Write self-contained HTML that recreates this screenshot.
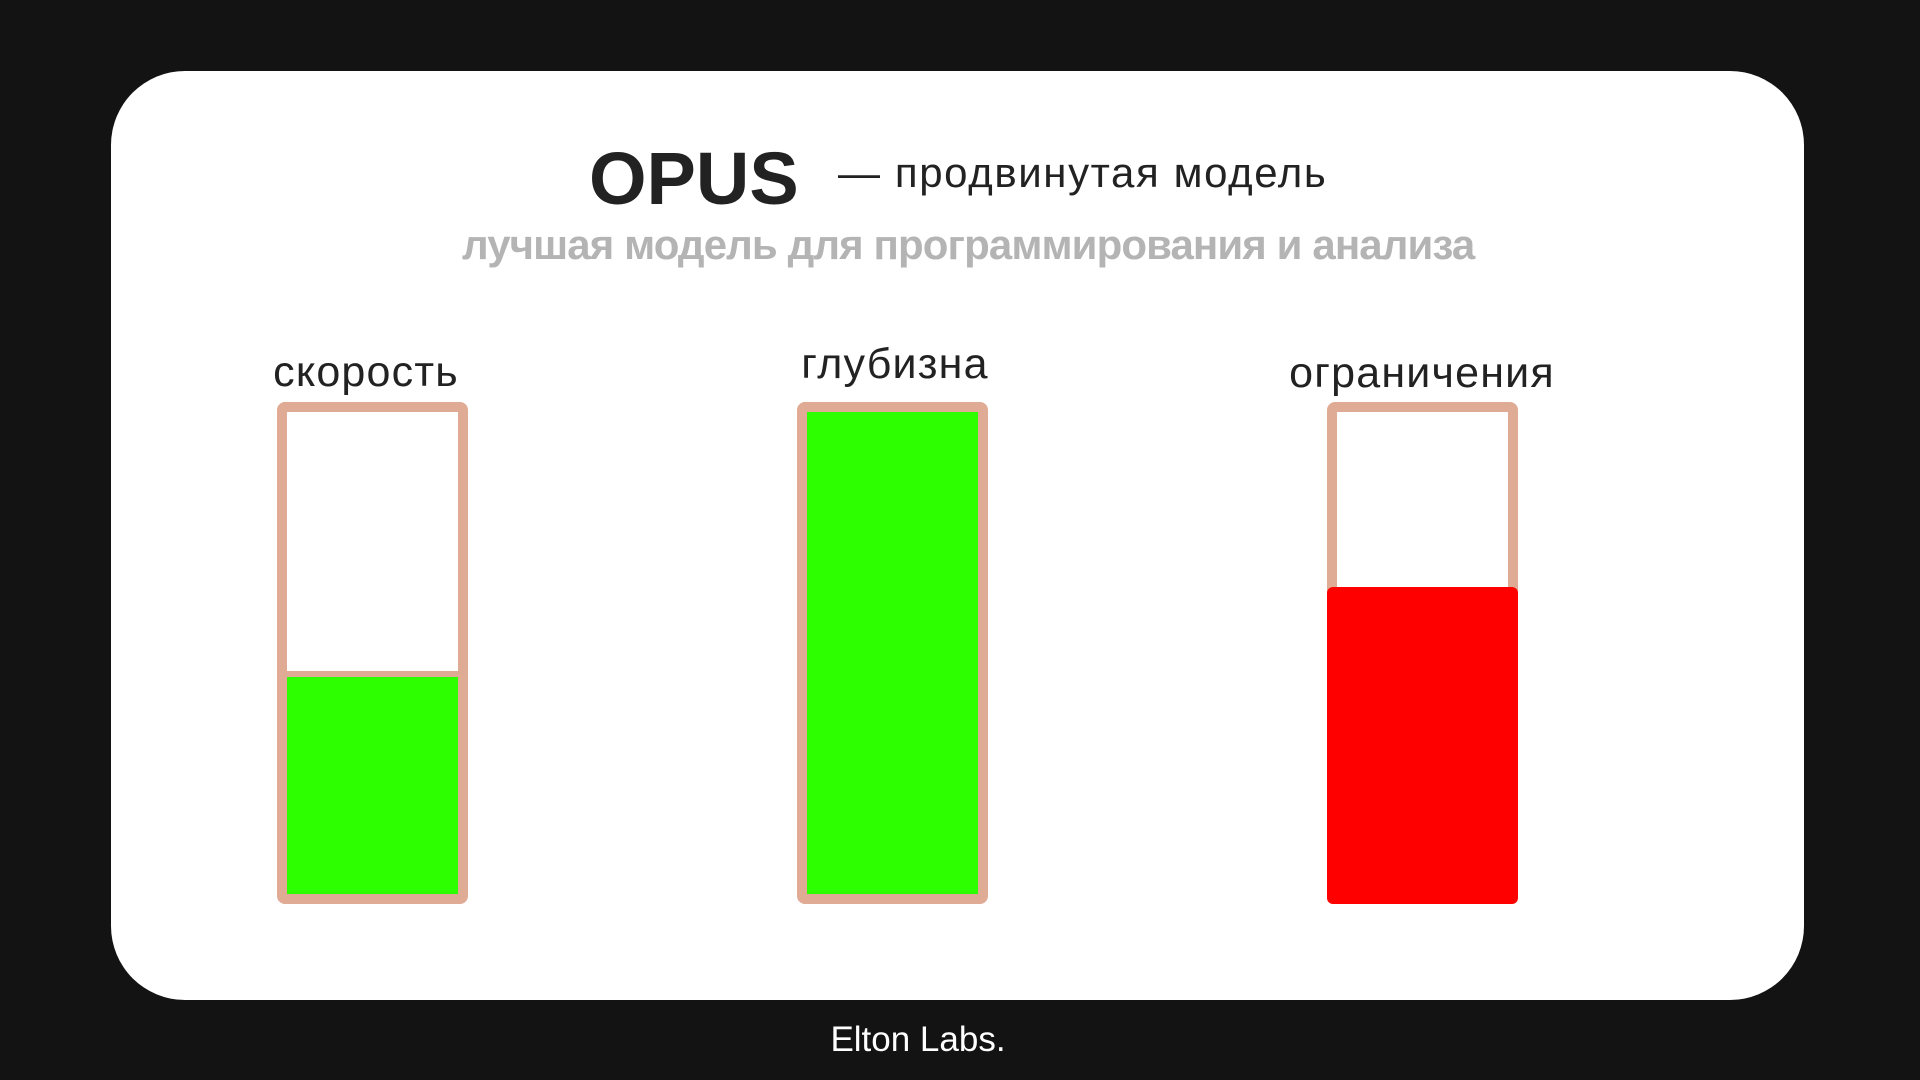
<!DOCTYPE html>
<html><head><meta charset="utf-8"><style>
body{margin:0;width:1920px;height:1080px;background:#131313;position:relative;overflow:hidden;font-family:"Liberation Sans",sans-serif}
.card{position:absolute;left:111px;top:71px;width:1693px;height:929px;background:#fff;border-radius:74px}
.t{position:absolute;white-space:nowrap;line-height:1}
.bar{position:absolute;top:402px;width:171px;height:482px;border:10px solid #dfab95;border-radius:8px;background:#fff;overflow:hidden}
.lbl{position:absolute;font-size:43px;letter-spacing:1.2px;color:#222;transform:translateX(-50%);white-space:nowrap;line-height:1}
</style></head><body>
<div class="card"></div>
<div class="t" style="left:589px;top:142px;font-size:74px;font-weight:bold;color:#222">OPUS</div>
<div class="t" style="left:838px;top:152px;font-size:42px;letter-spacing:1.6px;color:#222">— продвинутая модель</div>
<div class="t" style="left:462px;top:224px;font-size:42px;font-weight:bold;color:#b4b4b4;letter-spacing:-0.9px">лучшая модель для программирования и анализа</div>
<div class="lbl" style="left:366px;top:351px">скорость</div>
<div class="lbl" style="left:895px;top:343px">глубизна</div>
<div class="lbl" style="left:1422px;top:352px">ограничения</div>
<div class="bar" style="left:277px"><div style="position:absolute;left:0;right:0;bottom:0;height:217px;background:#2eff00;border-top:6px solid #dfab95"></div></div>
<div class="bar" style="left:797px;background:#2eff00"></div>
<div class="bar" style="left:1327px"></div>
<div style="position:absolute;left:1327px;top:587px;width:191px;height:317px;background:#ff0000;border-radius:6px"></div>
<div class="t" style="left:918px;top:1022px;transform:translateX(-50%);font-size:35px;color:#fff">Elton Labs.</div>
</body></html>
